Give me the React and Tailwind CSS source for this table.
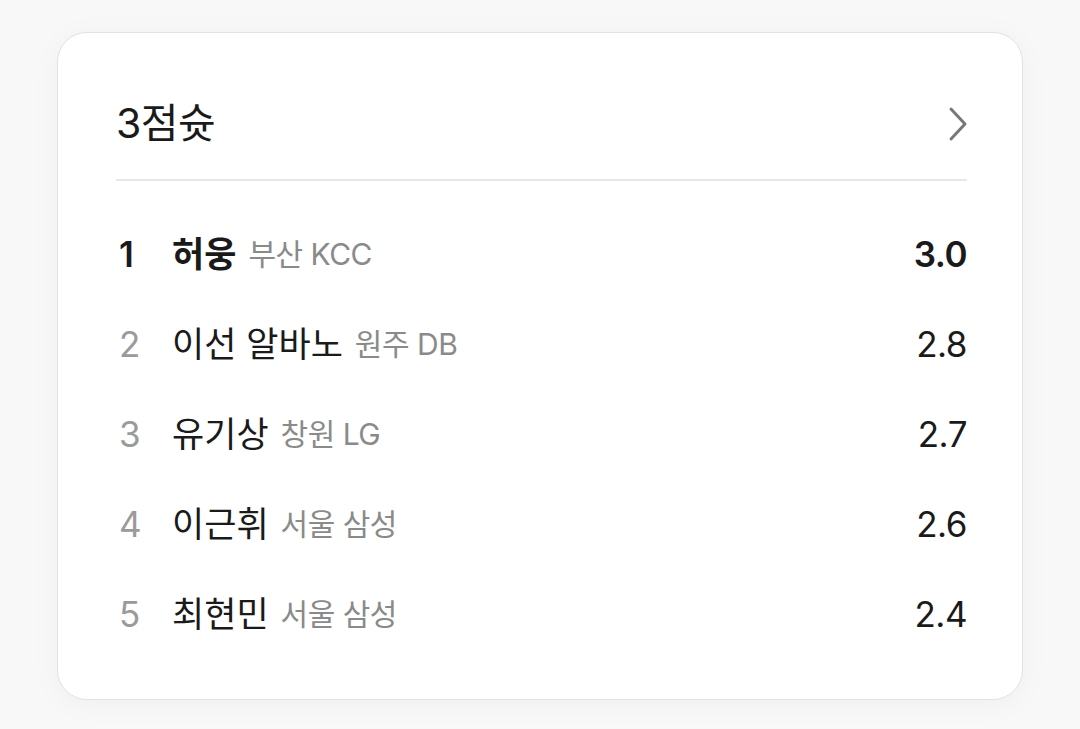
const players = [
  { rank: 1, name: "허웅", team: "부산 KCC", value: "3.0" },
  { rank: 2, name: "이선 알바노", team: "원주 DB", value: "2.8" },
  { rank: 3, name: "유기상", team: "창원 LG", value: "2.7" },
  { rank: 4, name: "이근휘", team: "서울 삼성", value: "2.6" },
  { rank: 5, name: "최현민", team: "서울 삼성", value: "2.4" },
];

export default function App() {
  return (
    <div
      className="min-h-screen bg-[#f8f8f8] pt-[32px] pl-[57px]"
      style={{ fontFamily: 'Inter, "Noto Sans CJK KR", sans-serif' }}
    >
      <div className="w-[966px] h-[668px] rounded-[30px] border border-[#e2e2e2] bg-white shadow-[0_4px_30px_rgba(0,0,0,0.04)] pl-[58px] pr-[55px]">
        {/* Header */}
        <div className="mt-[71px] h-[40px] flex items-center justify-between">
          <h2 className="text-[41px] font-normal text-[#1a1a1a] tracking-[-0.5px]">3점슛</h2>
          <svg width="20" height="36" viewBox="0 0 20 36" className="-mr-[1px]">
            <polyline
              points="3,3 17,18 3,33"
              fill="none"
              stroke="#777"
              strokeWidth="3"
              strokeLinecap="round"
              strokeLinejoin="round"
            />
          </svg>
        </div>
        <div className="mt-[35px] border-b-2 border-[#e8e8e8]" />

        {/* Rows */}
        <div className="pt-[28px]">
          {players.map((p) => (
            <div key={p.rank} className="h-[90px] flex items-center">
              <span
                className={`w-[56px] pl-[3px] text-[35px] ${
                  p.rank === 1 ? "font-semibold text-[#1a1a1a]" : "text-[#9a9a9a]"
                }`}
              >
                {p.rank}
              </span>
              <span
                className={`text-[35px] text-[#1a1a1a] ${
                  p.rank === 1 ? "font-semibold" : ""
                }`}
              >
                {p.name}
              </span>
              <span className="ml-[12px] text-[30px] text-[#8a8a8a] tracking-[-0.5px]">{p.team}</span>
              <span
                className={`ml-auto text-[35px] text-[#1a1a1a] tracking-[-0.5px] ${
                  p.rank === 1 ? "font-semibold" : ""
                }`}
              >
                {p.value}
              </span>
            </div>
          ))}
        </div>
      </div>
    </div>
  );
}
